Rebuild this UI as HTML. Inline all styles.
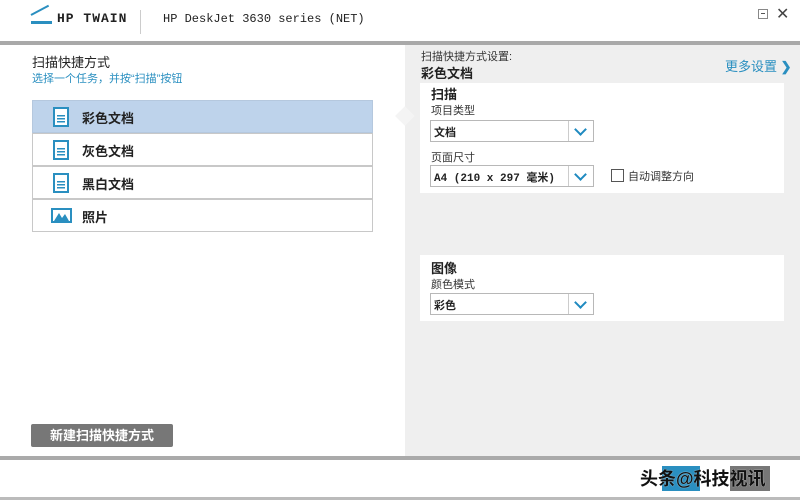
<!DOCTYPE html>
<html><head><meta charset="utf-8"><style>
*{margin:0;padding:0;box-sizing:border-box}
body{width:800px;height:500px;position:relative;background:#fff;font-family:"Liberation Sans","Noto Sans CJK SC",sans-serif;overflow:hidden;color:#222}
.a{position:absolute}
.mono{font-family:"Liberation Mono","Noto Sans CJK SC",monospace}
.item{position:absolute;left:32px;width:341px;height:33px;border:1px solid #c8c8c8;background:#fff;font-size:13px;font-weight:bold}
.item span{position:absolute;left:49px;top:7px}
.doc{position:absolute;left:20px;top:6px;width:16px;height:20px;border:2px solid #2a8fc0;background:linear-gradient(#2a8fc0,#2a8fc0) 2px 6px/8px 1.5px no-repeat,linear-gradient(#2a8fc0,#2a8fc0) 2px 9px/8px 1.5px no-repeat,linear-gradient(#2a8fc0,#2a8fc0) 2px 12px/8px 1.5px no-repeat,#fff}
.sel{position:absolute;left:430px;width:164px;height:22px;border:1px solid #b8b8b8;background:#fff;font-size:11px;font-weight:bold}
.sel span{position:absolute;left:3px;top:3px}
.sel i{position:absolute;right:0;top:0;width:25px;height:20px;border-left:1px solid #ccc}
.sel i:after{content:"";position:absolute;left:7px;top:4px;width:7px;height:7px;border-right:2.5px solid #1f8ac0;border-bottom:2.5px solid #1f8ac0;transform:rotate(45deg)}
.lbl{position:absolute;left:431px;font-size:11px;color:#333}
</style></head><body>
<div class="a" style="left:31px;top:14px;width:20px;height:2px;background:#2a8fc0;transform:rotate(-28deg);transform-origin:left"></div>
<div class="a" style="left:31px;top:21px;width:21px;height:3px;background:#2a8fc0"></div>
<div class="a mono" style="left:57px;top:11px;font-size:13px;font-weight:bold;letter-spacing:1px">HP TWAIN</div>
<div class="a" style="left:140px;top:10px;width:1px;height:24px;background:#ccc"></div>
<div class="a mono" style="left:163px;top:12px;font-size:12px">HP DeskJet 3630 series (NET)</div>
<div class="a" style="left:758px;top:9px;width:10px;height:10px;border:1px solid #888"></div>
<div class="a" style="left:761px;top:13px;width:4px;height:1px;background:#555"></div>
<div class="a" style="left:776px;top:4px;font-size:16px;color:#444">✕</div>
<div class="a" style="left:0;top:41px;width:800px;height:4px;background:#a9a9a9"></div>
<div class="a" style="left:405px;top:45px;width:395px;height:411px;background:#efefef"></div>
<div class="a" style="left:398px;top:109px;width:14px;height:14px;background:#f4f4f4;transform:rotate(45deg)"></div>
<div class="a" style="left:421px;top:48px;font-size:11px;color:#333">扫描快捷方式设置:</div>
<div class="a" style="left:421px;top:63px;font-size:13px;font-weight:bold">彩色文档</div>
<div class="a" style="left:725px;top:56px;font-size:13px;color:#2a8fc0">更多设置 <b>❯</b></div>
<div class="a" style="left:420px;top:83px;width:364px;height:110px;background:#fff"></div>
<div class="a" style="left:431px;top:84px;font-size:13px;font-weight:bold">扫描</div>
<div class="lbl" style="top:102px">项目类型</div>
<div class="sel" style="top:120px"><span>文档</span><i></i></div>
<div class="lbl" style="top:149px">页面尺寸</div>
<div class="sel mono" style="top:165px"><span>A4 (210 x 297 毫米)</span><i></i></div>
<div class="a" style="left:611px;top:169px;width:13px;height:13px;border:1px solid #555;background:#fff"></div>
<div class="a" style="left:628px;top:168px;font-size:11px;color:#333">自动调整方向</div>
<div class="a" style="left:420px;top:255px;width:364px;height:66px;background:#fff"></div>
<div class="a" style="left:431px;top:258px;font-size:13px;font-weight:bold">图像</div>
<div class="lbl" style="top:276px">颜色模式</div>
<div class="sel" style="top:293px"><span>彩色</span><i></i></div>
<div class="a" style="left:32px;top:52px;font-size:13px">扫描快捷方式</div>
<div class="a" style="left:32px;top:70px;font-size:11px;color:#2a8fc0">选择一个任务，并按“扫描”按钮</div>
<div class="item" style="top:100px;background:#bed3eb;border-color:#b5c8de"><div class="doc"></div><span>彩色文档</span></div>
<div class="item" style="top:133px"><div class="doc"></div><span>灰色文档</span></div>
<div class="item" style="top:166px"><div class="doc"></div><span>黑白文档</span></div>
<div class="item" style="top:199px"><div class="a" style="left:18px;top:8px;width:21px;height:15px;border:2px solid #2a8fc0;background:#fff"><svg width="17" height="11" style="position:absolute;left:0;top:0"><path d="M1 11 L6 3 L9 8 L12 4 L16 11Z" fill="#2a8fc0"/></svg></div><span>照片</span></div>
<div class="a" style="left:31px;top:424px;width:142px;height:23px;background:#777;border-radius:2px;color:#fff;font-size:13px;font-weight:bold;text-align:center;line-height:23px">新建扫描快捷方式</div>
<div class="a" style="left:0;top:456px;width:800px;height:4px;background:#aaa"></div>
<div class="a" style="left:0;top:497px;width:800px;height:3px;background:#bbb"></div>
<div class="a" style="left:662px;top:466px;width:38px;height:25px;background:#2a8fc0"></div>
<div class="a" style="left:730px;top:466px;width:40px;height:25px;background:#777"></div>
<div class="a" style="left:640px;top:465px;font-size:18px;color:#111;font-weight:bold;text-shadow:0 0 1px #fff">头条@科技视讯</div>
</body></html>
